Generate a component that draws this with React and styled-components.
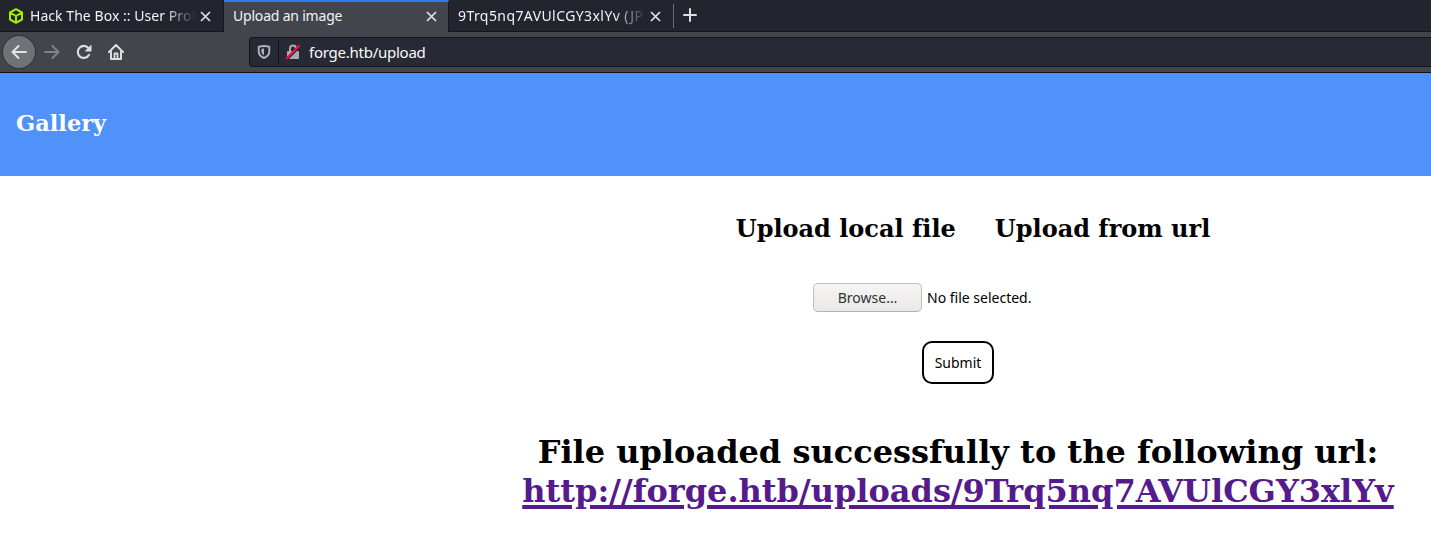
import React from "react";
import styled, { createGlobalStyle } from "styled-components";

const GlobalStyle = createGlobalStyle`
  * { box-sizing: border-box; }
  html, body { margin: 0; padding: 0; overflow: hidden; background: #fff; }
`;

const ui = `"Noto Sans", "Open Sans", sans-serif`;
const serif = `"DejaVu Serif", serif`;

const Browser = styled.div`
  width: 100vw;
  height: 541px;
  overflow: hidden;
  background: #fff;
`;

const TabBar = styled.div`
  display: flex;
  height: 32px;
  background: #23252e;
  box-shadow: inset 0 -1px #15161c;
`;

const Tab = styled.div`
  flex: none;
  display: flex;
  align-items: center;
  width: ${(p) => p.$width}px;
  height: 32px;
  padding: 0 ${(p) => (p.$active ? 11 : 12)}px 2px ${(p) => (p.$icon ? 8 : 9)}px;
  color: #f3f3f4;
  background: ${(p) => (p.$active ? "#42454c" : "transparent")};
  border-top: 2px solid ${(p) => (p.$active ? "#2a7bf6" : "transparent")};
  border-right: ${(p) => (p.$last ? "0" : "1px solid #15161c")};
`;

const TabTitle = styled.span`
  flex: 1;
  min-width: 0;
  margin-left: ${(p) => (p.$icon ? 6 : 0)}px;
  margin-right: 4px;
  white-space: nowrap;
  font: 14px/20px ${ui};
  letter-spacing: ${(p) => p.$spacing || 0}px;
  ${(p) =>
    p.$fade &&
    "mask-image: linear-gradient(to left, transparent 0, #000 32px);"}
`;

const NewTab = styled.div`
  display: flex;
  align-items: center;
  height: 24px;
  margin-top: 4px;
  padding: 0 0 2px 8px;
  border-left: 1px solid #6c6d73;
`;

const Toolbar = styled.div`
  display: flex;
  align-items: center;
  height: 41px;
  padding: 0 0 1px 3px;
  background: #42454c;
  border-bottom: 1px solid #111217;
`;

const Back = styled.div`
  display: grid;
  place-items: center;
  width: 32px;
  height: 32px;
  margin-right: 1px;
  border-radius: 50%;
  background: #707277;
  box-shadow: 0 0 0 1px #303238;
`;

const NavIcon = styled.div`
  display: grid;
  place-items: center;
  width: 32px;
  height: 32px;
  opacity: ${(p) => (p.$dim ? 0.4 : 1)};
`;

const AddressBar = styled.div`
  flex: 1;
  display: flex;
  align-items: center;
  height: 30px;
  margin-left: 117px;
  padding-left: 7px;
  background: #272935;
  border: 1px solid #14151a;
  border-right: 0;
  border-radius: 4px 0 0 4px;
`;

const AddressDivider = styled.div`
  width: 1px;
  height: 22px;
  margin: 0 6px 0 7px;
  background: #111217;
`;

const Address = styled.span`
  margin-left: 8px;
  color: #f9f9fa;
  font: 15px/20px ${ui};
  letter-spacing: ${(p) => p.$spacing}px;
`;

const Page = styled.div`
  width: 1916px;
`;

const Header = styled.header`
  height: 103px;
  padding: 36px 16px 0;
  background: #5191fa;
`;

const Brand = styled.h2`
  margin: 0;
  color: #fff;
  font: bold 22.5px/28px ${serif};
`;

const Content = styled.main`
  display: flex;
  flex-direction: column;
  align-items: center;
`;

const Options = styled.nav`
  display: flex;
  gap: 39px;
  margin: 39px 0 0 30px;
`;

const Option = styled.h2`
  margin: 0;
  color: #000;
  font: bold 24px/28px ${serif};
  font-variant-ligatures: none;
`;

const FilePicker = styled.div`
  display: flex;
  align-items: center;
  width: 290px;
  height: 29px;
  margin-top: 40px;
  gap: 5px;
  font: 14px/20px ${ui};
  color: #000;
`;

const Browse = styled.button`
  width: 109px;
  height: 29px;
  padding: 0;
  border: 1px solid #c1bfbc;
  border-bottom-color: #b3b1ad;
  border-radius: 5px;
  background: linear-gradient(#f6f5f4, #e9e8e6);
  color: #2e3436;
  font: 14px/20px ${ui};
`;

const FileName = styled.span`
  white-space: nowrap;
`;

const Submit = styled.button`
  width: 72px;
  height: 43px;
  margin-top: 29px;
  padding: 0;
  border: 2px solid #000;
  border-radius: 10px;
  background: #fff;
  color: #000;
  font: 14px/20px ${ui};
`;

const Result = styled.h1`
  margin: 49px 0 0;
  text-align: center;
  color: #000;
  font: bold 32px/39px ${serif};
`;

const ResultLink = styled.a`
  color: #551a8b;
  text-decoration: underline;
  text-decoration-thickness: 4px;
  text-underline-offset: 3px;
`;

const CloseIcon = () => (
  <svg width="11" height="11" viewBox="0 0 11 11" fill="none" stroke="#e2e2e3" strokeWidth="1.7">
    <path d="M1 1l9 9M10 1l-9 9" />
  </svg>
);

const CubeIcon = () => (
  <svg width="16" height="16" viewBox="0 0 16 16" fill="none" stroke="#9fef00" strokeWidth="2" strokeLinejoin="round">
    <path d="M8 1.2l6 3.3v7L8 14.8l-6-3.3v-7zM2 4.6L8 8l6-3.4M8 8v6.5" />
  </svg>
);

const BackIcon = () => (
  <svg width="16" height="16" viewBox="0 0 16 16" fill="none" stroke="#e4e4e2" strokeWidth="2" strokeLinecap="round" strokeLinejoin="round">
    <path d="M15 8H1.5M7.5 2L1.5 8l6 6" />
  </svg>
);

const ForwardIcon = () => (
  <svg width="16" height="16" viewBox="0 0 16 16" fill="none" stroke="#dededc" strokeWidth="2" strokeLinecap="round" strokeLinejoin="round">
    <path d="M1 8h13.5M8.5 2l6 6-6 6" />
  </svg>
);

const ReloadIcon = () => (
  <svg width="16" height="16" viewBox="0 0 16 16">
    <path d="M13.1 10.8A6 6 0 1 1 12.4 4" fill="none" stroke="#dededc" strokeWidth="2.1" strokeLinecap="round" />
    <path d="M14.8 1.2q.7-.5.7.3v5.3q0 .7-.7.7H9.5q-.9 0-.3-.7z" fill="#dededc" />
  </svg>
);

const HomeIcon = () => (
  <svg width="16" height="16" viewBox="0 0 16 16" fill="none" stroke="#dededc" strokeWidth="2" strokeLinecap="round" strokeLinejoin="round">
    <path d="M1 8l7-7 7 7M3 7.5V15h10V7.5" />
    <path d="M6.5 14.5V9.5h3v5" strokeWidth="1.8" />
  </svg>
);

const ShieldIcon = () => (
  <svg width="14" height="14" viewBox="0 0 14 14">
    <path d="M7 1c2 0 3.7.3 5.3.9v4.3c0 3.2-1.8 5.4-5.3 6.8-3.5-1.4-5.3-3.6-5.3-6.8V1.9C3.3 1.3 5 1 7 1z" fill="none" stroke="#b2b3b6" strokeWidth="1.9" strokeLinejoin="round" />
    <path d="M7 3.6v6.6c-1.8-1.1-2.6-2.3-2.6-4V4z" fill="#b2b3b6" />
  </svg>
);

const InsecureIcon = () => (
  <svg width="16" height="16" viewBox="0 0 16 16">
    <path d="M5 7V4.5a3 3 0 0 1 6 0V7" fill="none" stroke="#a9aaad" strokeWidth="2" />
    <rect x="2" y="7" width="12" height="8" rx="1" fill="#a9aaad" />
    <path d="M2.5 15.5L15 3" stroke="#272935" strokeWidth="1.4" />
    <path d="M1.7 14.3L14.2 1.8" stroke="#f5094b" strokeWidth="2" strokeLinecap="round" />
  </svg>
);

const PlusIcon = () => (
  <svg width="16" height="16" viewBox="0 0 16 16" fill="none" stroke="#dededc" strokeWidth="2" strokeLinecap="round">
    <path d="M8 2v12M2 8h12" />
  </svg>
);

export default function App() {
  return (
    <Browser>
      <GlobalStyle />
      <TabBar>
        <Tab $width={224} $icon>
          <CubeIcon />
          <TabTitle $icon $fade $spacing={0.05}>Hack The Box :: User Prof</TabTitle>
          <CloseIcon />
        </Tab>
        <Tab $width={225} $active>
          <TabTitle $spacing={-0.2}>Upload an image</TabTitle>
          <CloseIcon />
        </Tab>
        <Tab $width={224} $last>
          <TabTitle $fade $spacing={0.42}>9Trq5nq7AVUlCGY3xlYv (JP</TabTitle>
          <CloseIcon />
        </Tab>
        <NewTab><PlusIcon /></NewTab>
      </TabBar>
      <Toolbar>
        <Back><BackIcon /></Back>
        <NavIcon $dim><ForwardIcon /></NavIcon>
        <NavIcon><ReloadIcon /></NavIcon>
        <NavIcon><HomeIcon /></NavIcon>
        <AddressBar>
          <ShieldIcon />
          <AddressDivider />
          <InsecureIcon />
          <Address $spacing={-0.25}>forge.htb/upload</Address>
        </AddressBar>
      </Toolbar>
      <Page>
        <Header><Brand>Gallery</Brand></Header>
        <Content>
          <Options>
            <Option>Upload local file</Option>
            <Option>Upload from url</Option>
          </Options>
          <FilePicker>
            <Browse>Browse…</Browse>
            <FileName>No file selected.</FileName>
          </FilePicker>
          <Submit>Submit</Submit>
          <Result>
            File uploaded successfully to the following url:
            <br />
            <ResultLink>http://forge.htb/uploads/9Trq5nq7AVUlCGY3xlYv</ResultLink>
          </Result>
        </Content>
      </Page>
    </Browser>
  );
}
